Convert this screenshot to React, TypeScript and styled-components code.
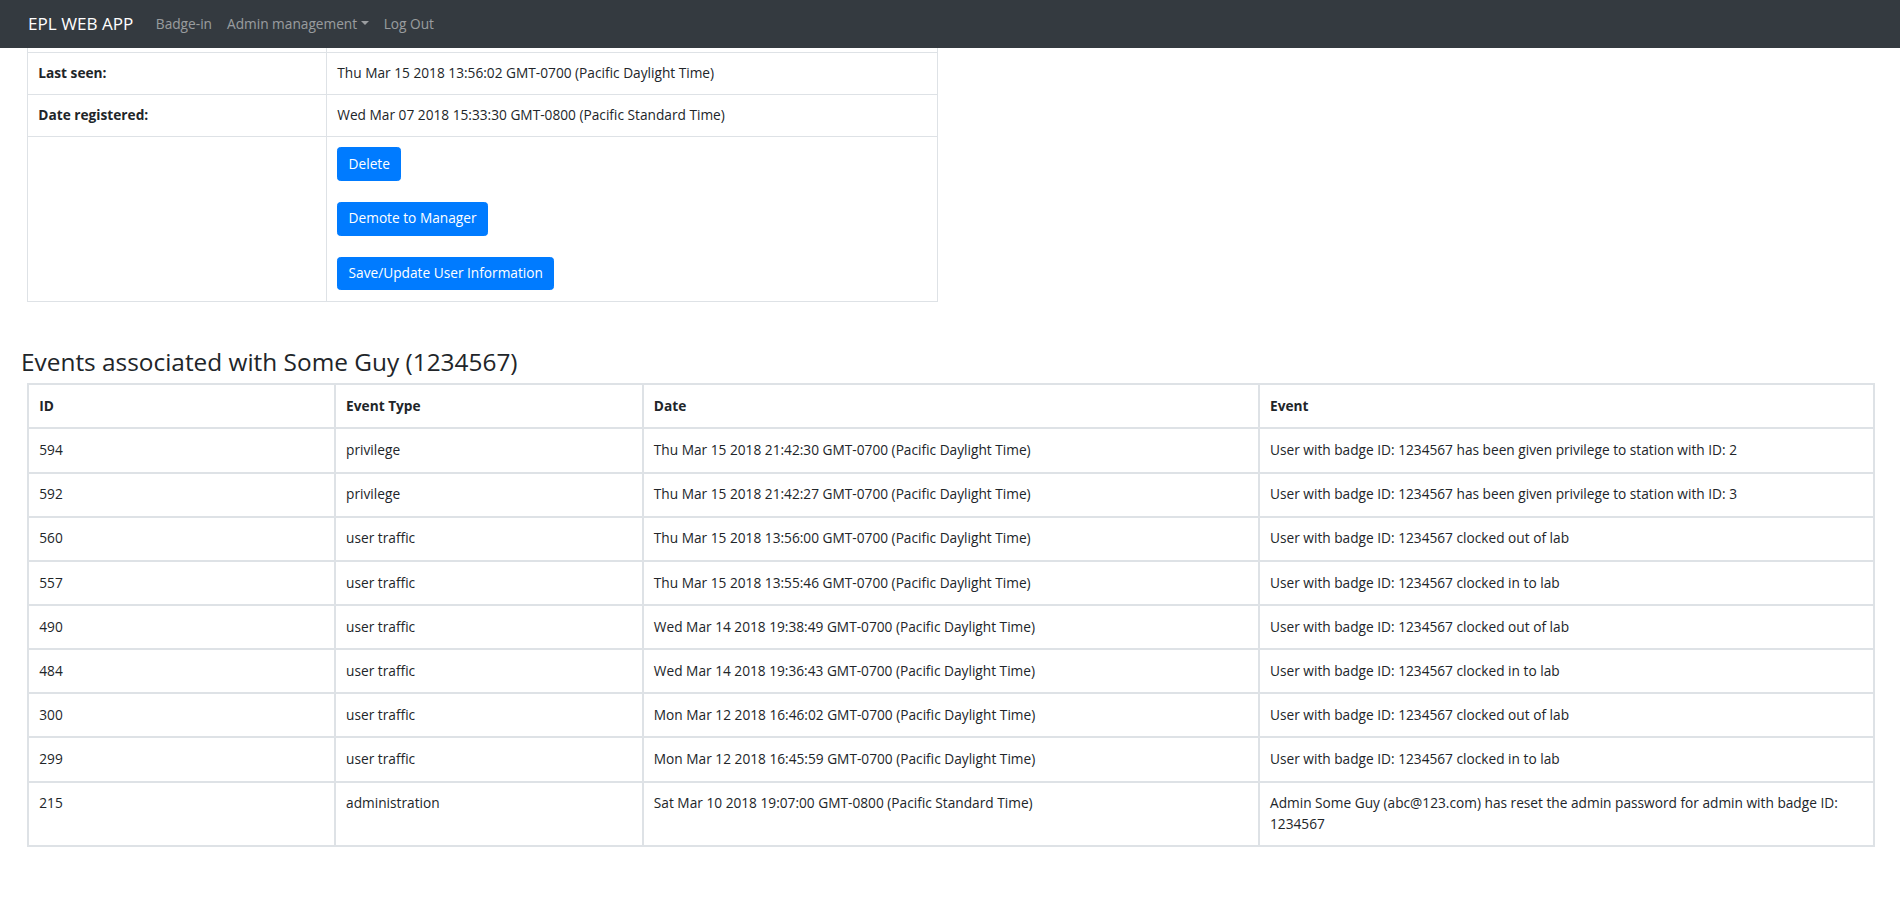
import React from "react";
import styled, { createGlobalStyle } from "styled-components";

type EventRow = {
    id: number
    type: string
    date: string
    event: string
}

const events: EventRow[] = [
    {id: 594, type: "privilege", date: "Thu Mar 15 2018 21:42:30 GMT-0700 (Pacific Daylight Time)", event: "User with badge ID: 1234567 has been given privilege to station with ID: 2"},
    {id: 592, type: "privilege", date: "Thu Mar 15 2018 21:42:27 GMT-0700 (Pacific Daylight Time)", event: "User with badge ID: 1234567 has been given privilege to station with ID: 3"},
    {id: 560, type: "user traffic", date: "Thu Mar 15 2018 13:56:00 GMT-0700 (Pacific Daylight Time)", event: "User with badge ID: 1234567 clocked out of lab"},
    {id: 557, type: "user traffic", date: "Thu Mar 15 2018 13:55:46 GMT-0700 (Pacific Daylight Time)", event: "User with badge ID: 1234567 clocked in to lab"},
    {id: 490, type: "user traffic", date: "Wed Mar 14 2018 19:38:49 GMT-0700 (Pacific Daylight Time)", event: "User with badge ID: 1234567 clocked out of lab"},
    {id: 484, type: "user traffic", date: "Wed Mar 14 2018 19:36:43 GMT-0700 (Pacific Daylight Time)", event: "User with badge ID: 1234567 clocked in to lab"},
    {id: 300, type: "user traffic", date: "Mon Mar 12 2018 16:46:02 GMT-0700 (Pacific Daylight Time)", event: "User with badge ID: 1234567 clocked out of lab"},
    {id: 299, type: "user traffic", date: "Mon Mar 12 2018 16:45:59 GMT-0700 (Pacific Daylight Time)", event: "User with badge ID: 1234567 clocked in to lab"},
    {id: 215, type: "administration", date: "Sat Mar 10 2018 19:07:00 GMT-0800 (Pacific Standard Time)", event: "Admin Some Guy (abc@123.com) has reset the admin password for admin with badge ID: 1234567"},
]

const GlobalStyle = createGlobalStyle`
  body {
    margin: 0;
    font-family: "Open Sans", "Noto Sans", sans-serif;
    font-size: 13.7px;
    line-height: 1.5;
    color: #212529;
    background: #fff;
  }
`

const App = () => {
    const mappedEvents = events.map(el => (
        <tr key={el.id}>
            <EvTd>{el.id}</EvTd>
            <EvTd>{el.type}</EvTd>
            <EvTd>{el.date}</EvTd>
            <EvTd>{el.event}</EvTd>
        </tr>
    ))

    return (
        <>
            <GlobalStyle/>
            <Navbar>
                <Brand>EPL WEB APP</Brand>
                <NavLink>Badge-in</NavLink>
                <NavLink>Admin management<Caret/></NavLink>
                <NavLink>Log Out</NavLink>
            </Navbar>

            <Main>
                <UserTable>
                    <tbody>
                    <SliverRow>
                        <th></th>
                        <td></td>
                    </SliverRow>
                    <tr>
                        <UserTh>Last seen:</UserTh>
                        <UserTd>Thu Mar 15 2018 13:56:02 GMT-0700 (Pacific Daylight Time)</UserTd>
                    </tr>
                    <tr>
                        <UserTh>Date registered:</UserTh>
                        <UserTd>Wed Mar 07 2018 15:33:30 GMT-0800 (Pacific Standard Time)</UserTd>
                    </tr>
                    <tr>
                        <UserTh></UserTh>
                        <UserTd>
                            <BtnStack>
                                <Btn>Delete</Btn>
                                <Btn>Demote to Manager</Btn>
                                <Btn>Save/Update User Information</Btn>
                            </BtnStack>
                        </UserTd>
                    </tr>
                    </tbody>
                </UserTable>

                <Heading>Events associated with Some Guy (1234567)</Heading>

                <EventsTable>
                    <colgroup>
                        <col style={{width: "16.62%"}}/>
                        <col style={{width: "16.67%"}}/>
                        <col style={{width: "33.38%"}}/>
                        <col style={{width: "33.33%"}}/>
                    </colgroup>
                    <thead>
                    <tr>
                        <EvTh>ID</EvTh>
                        <EvTh>Event Type</EvTh>
                        <EvTh>Date</EvTh>
                        <EvTh>Event</EvTh>
                    </tr>
                    </thead>
                    <tbody>
                    {mappedEvents}
                    </tbody>
                </EventsTable>
            </Main>
        </>
    )
}

export default App

const Navbar = styled.nav`
  height: 48px;
  background: #343a40;
  display: flex;
  align-items: center;
  padding: 0 0 0 28px;
`

const Brand = styled.a`
  color: #fff;
  font-size: 17.1px;
  line-height: 1;
  margin-right: 15px;
  cursor: pointer;
`

const NavLink = styled.a`
  color: rgba(255, 255, 255, 0.5);
  font-size: 13.7px;
  padding: 0 7.5px;
  cursor: pointer;
  display: flex;
  align-items: center;
`

const Caret = styled.span`
  display: inline-block;
  margin-left: 3.5px;
  width: 0;
  height: 0;
  border-top: 4.2px solid rgba(255, 255, 255, 0.5);
  border-left: 4.2px solid transparent;
  border-right: 4.2px solid transparent;
  margin-top: -1px;
`

const Main = styled.div`
  padding: 0 25px 40px 21px;
`

const UserTable = styled.table`
  border-collapse: collapse;
  width: 911px;
  margin-left: 6px;
  table-layout: fixed;

  th, td {
    border: 1px solid #dee2e6;
  }

  th:first-child {
    width: 298px;
  }
`

const SliverRow = styled.tr`
  height: 4px;

  th, td {
    padding: 0;
    border-top: 0;
  }
`

const UserTh = styled.th`
  text-align: left;
  font-weight: 700;
  padding: 10.3px;
  vertical-align: top;
`

const UserTd = styled.td`
  padding: 10.3px;
  vertical-align: top;
`

const BtnStack = styled.div`
  display: flex;
  flex-direction: column;
  align-items: flex-start;
  gap: 21px;
`

const Btn = styled.button`
  font-family: inherit;
  font-size: 13.7px;
  line-height: 1.5;
  color: #fff;
  background: #007bff;
  border: 1px solid #007bff;
  border-radius: 3.4px;
  padding: 5.6px 10.3px;
  cursor: pointer;
`

const Heading = styled.h3`
  font-size: 24.4px;
  font-weight: 500;
  line-height: 1.2;
  margin: 45px 0 7.4px;
`

const EventsTable = styled.table`
  border-collapse: collapse;
  table-layout: fixed;
  width: calc(100% - 6px);
  margin-left: 6px;
  border: 2px solid #dee2e6;
`

const EvTh = styled.th`
  text-align: left;
  font-weight: 700;
  vertical-align: bottom;
  padding: 10.8px 10.3px;
  border: 2px solid #dee2e6;
`

const EvTd = styled.td`
  vertical-align: top;
  padding: 10.8px 10.3px;
  border: 2px solid #dee2e6;
`
